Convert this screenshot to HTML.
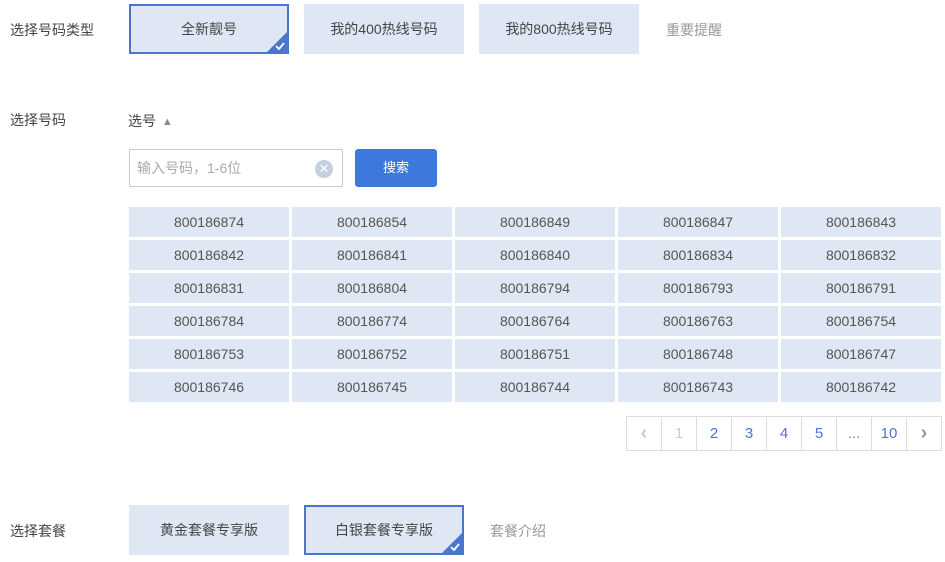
<!DOCTYPE html>
<html><head><meta charset="utf-8"><style>
*{margin:0;padding:0;box-sizing:border-box}
body{width:945px;height:562px;background:#fff;font-family:"Liberation Sans","Noto Sans CJK SC",sans-serif;font-size:14px;color:#333;position:relative;overflow:hidden}
.a{position:absolute}
.lbl{color:#444;font-size:14px}
.btn{position:absolute;background:#dfe6f4;color:#444;text-align:center;font-size:14px;height:50px;line-height:50px;width:160px}
.sel{border:2px solid #4a76cc;line-height:46px}
.sel svg{position:absolute;right:0;bottom:0}
.cell{position:absolute;width:160px;height:30px;line-height:30px;background:#dfe6f4;text-align:center;color:#555;font-size:14px}
.pg{position:absolute;top:416px;height:35px;width:36px;border:1px solid #ddd;text-align:center;line-height:33px;color:#4a76cc;font-size:15px;background:#fff}
</style></head><body>
<div class="a lbl" style="left:10px;top:20px">选择号码类型</div>
<div class="btn sel" style="left:129px;top:4px">全新靓号<svg width="20" height="20" viewBox="0 0 20 20"><path d="M20 0V20H0Z" fill="#4a76cc"/><path d="M9 14l3 3 5-6" stroke="#fff" stroke-width="1.8" fill="none"/></svg></div>
<div class="btn" style="left:304px;top:4px">我的400热线号码</div>
<div class="btn" style="left:479px;top:4px">我的800热线号码</div>
<div class="a" style="left:666px;top:20px;color:#999">重要提醒</div>

<div class="a lbl" style="left:10px;top:110px">选择号码</div>
<div class="a" style="left:128px;top:111px;color:#444">选号 <span style="font-size:11px;color:#888;position:relative;top:-1px;margin-left:2px">▲</span></div>
<div class="a" style="left:129px;top:149px;width:214px;height:38px;border:1px solid #ccc;border-radius:2px;color:#aaa;line-height:36px;padding-left:7px">输入号码，1-6位
<span style="position:absolute;right:9px;top:10px;width:18px;height:18px;border-radius:50%;background:#c5cfe0;color:#fff;font-size:13px;line-height:18px;text-align:center">✕</span></div>
<div class="a" style="left:355px;top:149px;width:82px;height:38px;background:#3d78dc;border-radius:3px;color:#fff;text-align:center;line-height:38px;font-size:13px">搜索</div>

<div id="g"></div>
<script>
var n=[["800186874","800186854","800186849","800186847","800186843"],["800186842","800186841","800186840","800186834","800186832"],["800186831","800186804","800186794","800186793","800186791"],["800186784","800186774","800186764","800186763","800186754"],["800186753","800186752","800186751","800186748","800186747"],["800186746","800186745","800186744","800186743","800186742"]];
var h="";for(var r=0;r<6;r++)for(var c=0;c<5;c++)h+='<div class="cell" style="left:'+(129+c*163)+'px;top:'+(207+r*33)+'px">'+n[r][c]+'</div>';
var p=["‹","1","2","3","4","5","...","10","›"];
for(var i=0;i<9;i++){var col=i==0||i==1?"#ccc":(i==8?"#999":(i==6?"#888":"#4a76cc"));h+='<div class="pg" style="left:'+(626+i*35)+'px;color:'+col+(i==0||i==8?';font-size:20px;font-weight:bold':'')+'">'+p[i]+'</div>';}
document.getElementById("g").innerHTML=h;
</script>

<div class="a lbl" style="left:10px;top:521px">选择套餐</div>
<div class="btn" style="left:129px;top:505px">黄金套餐专享版</div>
<div class="btn sel" style="left:304px;top:505px">白银套餐专享版<svg width="20" height="20" viewBox="0 0 20 20"><path d="M20 0V20H0Z" fill="#4a76cc"/><path d="M9 14l3 3 5-6" stroke="#fff" stroke-width="1.8" fill="none"/></svg></div>
<div class="a" style="left:490px;top:521px;color:#999">套餐介绍</div>
</body></html>
